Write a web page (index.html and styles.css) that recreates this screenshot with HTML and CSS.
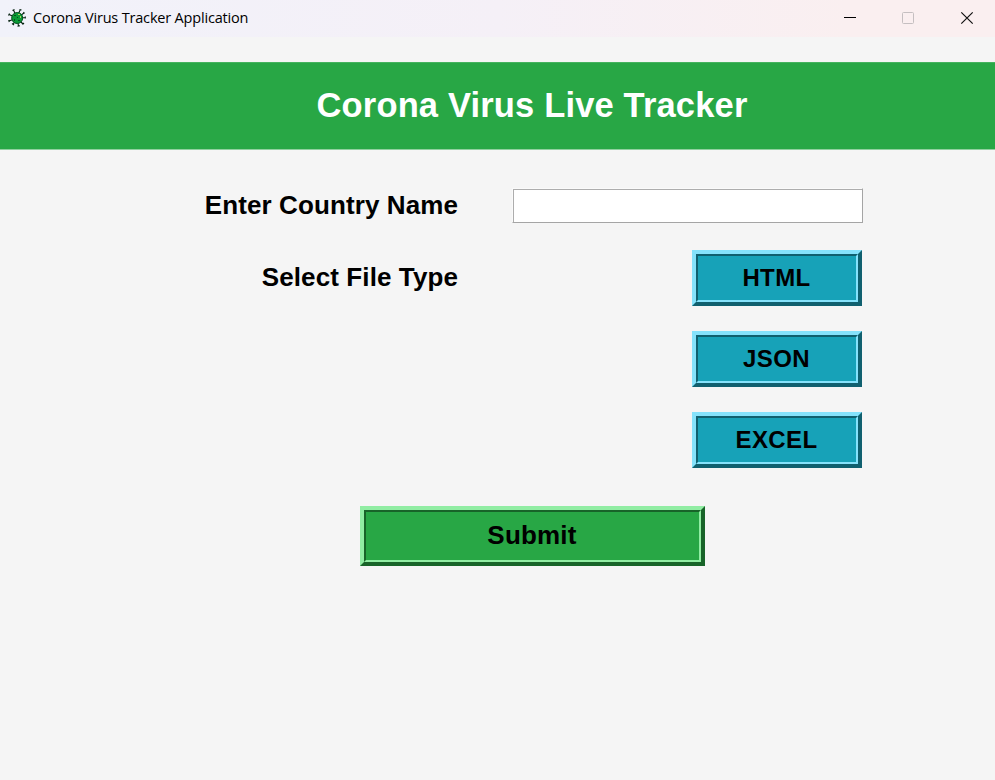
FILE: index.html
```html
<!DOCTYPE html>
<html lang="en">
<head>
<meta charset="utf-8">
<title>Corona Virus Tracker Application</title>
<link rel="stylesheet" href="styles.css">
</head>
<body>
<header class="titlebar">
  <svg class="app-icon" width="20" height="20" viewBox="0 0 20 20">
    <g stroke="#04200e" stroke-width="1.1" fill="none">
      <path d="M10 10 6.500 2M5.500 2.500l2-1M10 10l3-8M12.500 1.500l2 .5M10 10l7-5M16.500 4l1 1.500M10 10l8-.5M18.300 8.500v2M10 10l6 6M15.500 16.500l1.500-1.500M10 10l1.500 8M10.500 18.300l2.500-.5M10 10l-4 6.500M5 15.500l2 1.500M10 10l-8 3M1.700 12l.6 2M10 10 2 6.500M1.500 7.500l1-2"/>
    </g>
    <circle cx="10.200" cy="10" r="5.500" fill="#0a9b35" stroke="#055020"/>
    <path d="M7 7h2v1H7zM11 12h2v1h-2zM7 11h1v2H7zM10 9h1v1h-1z" fill="#04501e"/>
    <path d="M11 6h2v1h-2zM13 8h1v2h-1z" fill="#b3cf65"/>
  </svg>
  <span class="caption">Corona Virus Tracker Application</span>
  <svg class="controls" width="130" height="14" viewBox="0 0 130 14" fill="none">
    <path d="M0 6.500h12" stroke="#000"/>
    <rect x="58.500" y="1.500" width="11" height="11" rx="1" stroke="#c5bfc1"/>
    <path d="m117.300 1.300 11.400 11.400m0-11.400-11.400 11.400" stroke="#111" stroke-width="1.200"/>
  </svg>
</header>
<h1 class="banner">Corona Virus Live Tracker</h1>
<main class="form">
  <div class="row country">
    <label class="label" for="country">Enter Country Name</label>
    <input class="entry" id="country" type="text">
  </div>
  <div class="row types">
    <span class="label">Select File Type</span>
    <div class="choices">
      <button class="button type"><span>HTML</span></button>
      <button class="button type"><span>JSON</span></button>
      <button class="button type"><span>EXCEL</span></button>
    </div>
  </div>
  <button class="button submit"><span>Submit</span></button>
</main>
</body>
</html>
```
FILE: styles.css
```css
* { box-sizing: border-box; }
body {
  margin: 0;
  height: 780px;
  overflow: hidden;
  background: #f5f5f5;
  color: #000;
  font-family: "Liberation Sans", Arial, sans-serif;
}
.titlebar {
  display: flex;
  align-items: center;
  height: 37px;
  padding: 0 21px 2px 7px;
  background: linear-gradient(90deg, #f1f2fa, #f5f0f7 50%, #faeff0 85%);
}
.app-icon { margin-right: 6px; }
.caption {
  font: 14.5px/20px "Open Sans", "Noto Sans", sans-serif;
  letter-spacing: -0.18px;
  white-space: nowrap;
}
.controls { margin-left: auto; }
.banner {
  margin: 25px 0 0;
  height: 88px;
  padding-left: 69px;
  border-top: 1px solid #45b35e;
  border-bottom: 1px solid #91d09f;
  background: #28a745;
  color: #fff;
  font-size: 34.5px;
  line-height: 85px;
  letter-spacing: 0.16px;
  text-align: center;
}
.form { display: flex; flex-direction: column; }
.row {
  display: flex;
  justify-content: space-between;
  width: 862px;
}
.label {
  width: 458px;
  font-size: 26px;
  font-weight: bold;
  line-height: 34px;
  letter-spacing: 0.1px;
  text-align: right;
}
.country { margin-top: 38px; width: 863px; height: 36px; }
.entry {
  width: 351px;
  height: 35px;
  border: 1px solid;
  border-color: #fafafa #a5a5a5 #a5a5a5 #fafafa;
  background: #fff;
  box-shadow: inset 1px 1px #adadad;
  outline: 0;
}
.types { margin-top: 26px; }
.types .label { margin-top: 10px; }
.choices { display: flex; flex-direction: column; gap: 25px; }
.button {
  display: block;
  padding: 0;
  border: 4px solid;
  border-color: var(--light) var(--dark) var(--dark) var(--light);
  background: var(--face);
  color: #000;
  font: bold 24px "Liberation Sans", Arial, sans-serif;
}
.button span {
  display: flex;
  align-items: center;
  justify-content: center;
  width: 100%;
  height: 100%;
  border: 2px solid;
  border-color: var(--dark) var(--light) var(--light) var(--dark);
  padding: 0 1px 1px 0;
}
.type {
  --light: #85e2fb;
  --dark: #10606f;
  --face: #17a2b8;
  width: 170px;
  height: 56px;
  letter-spacing: 0.4px;
}
.submit {
  --light: #91eda3;
  --dark: #186429;
  --face: #28a745;
  width: 345px;
  height: 60px;
  margin: 38px 0 0 360px;
  font-size: 26px;
  letter-spacing: 0.2px;
}
```
